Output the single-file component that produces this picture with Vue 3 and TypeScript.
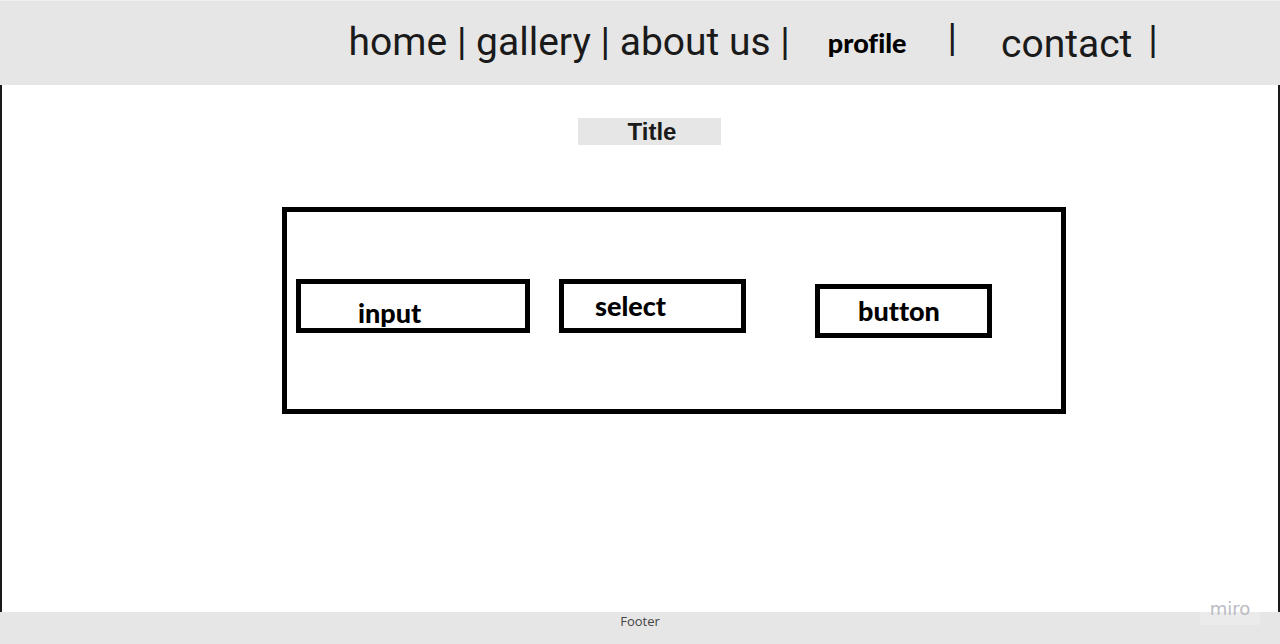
<script setup lang="ts">
import { ref } from 'vue'

interface NavLink {
  label: string
  href: string
}

const mainLinks: NavLink[] = [
  { label: 'home', href: '#home' },
  { label: 'gallery', href: '#gallery' },
  { label: 'about us', href: '#about' },
]

const text = ref('input')
const choice = ref('select')
</script>

<template>
  <div class="page">
    <header class="header">
      <nav class="nav" aria-label="Main">
        <div class="group">
          <template v-for="link in mainLinks" :key="link.href"><a :href="link.href">{{ link.label }}</a> | </template>
        </div>
        <a class="profile" href="#profile">profile</a>
        <span class="bar">|</span>
        <a class="contact" href="#contact">contact</a>
        <span class="bar">|</span>
      </nav>
    </header>

    <main class="main">
      <h1 class="title">Title</h1>
      <form class="panel" @submit.prevent>
        <input v-model="text" class="control text-box" type="text" aria-label="input" />
        <select v-model="choice" class="control picker" aria-label="select">
          <option>select</option>
        </select>
        <button class="control action" type="submit">button</button>
      </form>
    </main>

    <footer class="footer">
      <span>Footer</span>
      <span class="brand">miro</span>
    </footer>
  </div>
</template>

<style>
body {
  margin: 0;
}
</style>

<style scoped>
.page {
  display: flex;
  flex-direction: column;
  min-height: 100vh;
  background: #fff;
  color: #1a1a1a;
  font-family: Roboto, sans-serif;
}

.page * {
  box-sizing: border-box;
}

a {
  color: inherit;
  text-decoration: none;
}

.header {
  padding: 17px 0 16px calc(27% + 3px);
  border-top: 1px solid #efefef;
  background: #e6e6e6;
}

.nav {
  display: flex;
  align-items: flex-start;
  height: 51px;
  font-size: 39px;
  line-height: 48px;
  white-space: nowrap;
}

.profile {
  margin-left: 38px;
  color: #000;
  font-family: Lato, sans-serif;
  font-size: 27px;
  font-weight: 900;
  font-variant-ligatures: none;
  line-height: 50px;
}

.bar {
  margin-left: 41px;
  line-height: 41px;
}

.contact {
  margin-left: 44px;
  line-height: 52px;
}

.contact + .bar {
  margin-left: 16px;
  line-height: 44px;
}

.main {
  flex: 1;
  display: grid;
  grid-template-columns: 280fr 784fr 212fr;
  grid-template-rows: auto auto 1fr;
  row-gap: 62px;
  padding-top: 33px;
  border: solid #1a1a1a;
  border-width: 0 2px;
}

.title {
  grid-column: 1 / -1;
  justify-self: center;
  width: 143px;
  margin: 0 0 0 18px;
  padding-left: 6px;
  background: #e6e6e6;
  font-family: "Liberation Sans", Arial, sans-serif;
  font-size: 24px;
  line-height: 27px;
  text-align: center;
}

.panel {
  grid-column: 2;
  display: flex;
  align-items: flex-start;
  padding: 67px 9px 71px;
  border: 5px solid #000;
}

.control {
  height: 54px;
  margin: 0;
  border: 5px solid #000;
  border-radius: 0;
  background: #fff;
  color: #000;
  font-family: Lato, sans-serif;
  font-size: 27px;
  font-weight: 900;
  font-variant-ligatures: none;
  line-height: 32px;
  text-align: left;
}

.text-box {
  width: 234px;
  padding: 12px 0 0 57px;
}

.picker {
  width: 187px;
  margin-left: 29px;
  padding: 0 0 0 31px;
  appearance: none;
}

.action {
  width: 177px;
  margin: 5px 0 0 69px;
  padding: 0 0 0 38px;
}

.footer {
  position: relative;
  height: 32px;
  background: #e6e6e6;
  color: #444;
  font-family: "Open Sans", sans-serif;
  font-size: 13px;
  line-height: 18px;
  text-align: center;
}

.brand {
  position: absolute;
  top: -16px;
  right: 20px;
  width: 60px;
  padding-bottom: 3px;
  background: rgba(255, 255, 255, 0.2);
  color: #bbbbc3;
  font-family: "DejaVu Sans", sans-serif;
  font-size: 18px;
  line-height: 26px;
}
</style>
